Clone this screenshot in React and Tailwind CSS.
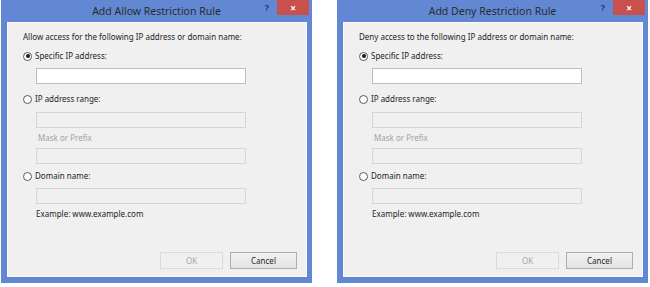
import React from "react";

const Radio = ({ checked, label }) => (
  <div className="flex items-center h-[10px] mt-0">
    <span className="w-[9px] h-[9px] rounded-full border border-[#5a5a5a] bg-white flex items-center justify-center ml-[15px]">
      {checked && <span className="w-[4px] h-[4px] rounded-full bg-[#1a1a1a]" />}
    </span>
    <span className="ml-[3px] text-[#1e1e1e]">{label}</span>
  </div>
);

const Field = ({ disabled, className = "" }) => (
  <div
    className={`ml-[28px] w-[210px] h-[16px] border ${
      disabled ? "border-[#d6d6d6] bg-[#f0f0f0]" : "border-[#bdbdbd] bg-white"
    } ${className}`}
  />
);

const Dialog = ({ title, intro }) => (
  <div className="w-[311px] h-[283px] bg-[#6288d3] flex flex-col">
    <div className="h-[22px] grid grid-cols-[1fr_auto_1fr] items-start">
      <div />
      <div className="pt-[4px] text-[10.5px] leading-[14px] text-[#2b2b2b]">{title}</div>
      <div className="flex justify-end items-start">
        <span className="mt-[3px] mr-[8px] text-[9px] leading-[10px] font-bold text-[#2d3a55]">?</span>
        <div className="w-[32px] h-[15px] mr-[3px] bg-[#c9504c] flex items-center justify-center text-white text-[10px] leading-none font-bold">
          ×
        </div>
      </div>
    </div>
    <div className="ml-[6px] mr-[5px] mb-[6px] flex-1 bg-[#f0f0f0] border border-[#fafafa] flex flex-col text-[8px] leading-[10px] pt-[9px]">
      <div className="ml-[15px] text-[#1e1e1e]">{intro}</div>
      <div className="mt-[9px]">
        <Radio checked label="Specific IP address:" />
      </div>
      <Field className="mt-[7px]" />
      <div className="mt-[10px]">
        <Radio label="IP address range:" />
      </div>
      <Field disabled className="mt-[8px]" />
      <div className="mt-[5px] ml-[30px] text-[#a3a3a3]">Mask or Prefix</div>
      <Field disabled className="mt-[5px]" />
      <div className="mt-[7px]">
        <Radio label="Domain name:" />
      </div>
      <Field disabled className="mt-[7px]" />
      <div className="mt-[5px] ml-[28px] text-[#1e1e1e]">Example: www.example.com</div>
      <div className="mt-auto mb-[7px] mr-[9px] flex justify-end gap-[7px]">
        <div className="w-[63px] h-[17px] border border-[#dadada] bg-[#f0f0f0] flex items-center justify-center text-[#a8a8a8]">
          OK
        </div>
        <div className="w-[67px] h-[17px] border border-[#adadad] bg-gradient-to-b from-[#f2f2f2] to-[#e4e4e4] flex items-center justify-center text-[#1e1e1e]">
          Cancel
        </div>
      </div>
    </div>
  </div>
);

export default function App() {
  return (
    <div className="w-[650px] h-[287px] bg-white flex gap-[25px] pl-[1px] font-['Noto_Sans',sans-serif]">
      <Dialog
        title="Add Allow Restriction Rule"
        intro="Allow access for the following IP address or domain name:"
      />
      <Dialog
        title="Add Deny Restriction Rule"
        intro="Deny access to the following IP address or domain name:"
      />
    </div>
  );
}
